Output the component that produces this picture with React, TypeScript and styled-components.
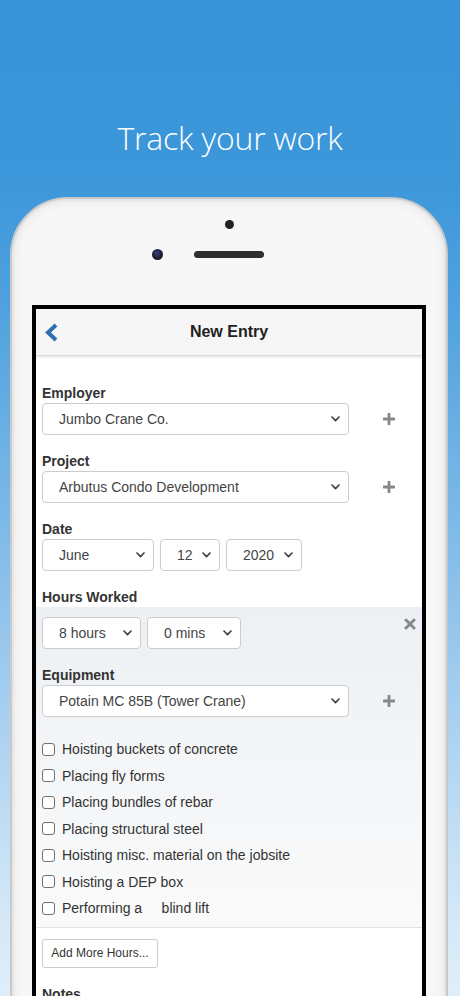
import styled, { createGlobalStyle } from "styled-components";

const GlobalStyle = createGlobalStyle`
  html, body {
    margin: 0;
    padding: 0;
    height: 100%;
    overflow: hidden;
  }

  #root {
    height: 100%;
  }

  * {
    box-sizing: border-box;
  }
`;

const uiFont = `"Liberation Sans", Arial, Helvetica, sans-serif`;

const tasks = [
  "Hoisting buckets of concrete",
  "Placing fly forms",
  "Placing bundles of rebar",
  "Placing structural steel",
  "Hoisting misc. material on the jobsite",
  "Hoisting a DEP box",
  "Performing a     blind lift",
];

const Chevron = () => (
  <svg width="9" height="6" viewBox="0 0 9 6" fill="none">
    <polyline
      points="1,1 4.5,4.6 8,1"
      stroke="#444"
      strokeWidth="1.7"
      strokeLinecap="round"
      strokeLinejoin="round"
    />
  </svg>
);

const PlusIcon = () => (
  <svg width="12" height="12" viewBox="0 0 12 12">
    <rect x="4.6" y="0" width="2.8" height="12" rx="0.6" fill="#888" />
    <rect x="0" y="4.6" width="12" height="2.8" rx="0.6" fill="#888" />
  </svg>
);

const CloseIcon = () => (
  <svg width="12" height="12" viewBox="0 0 12 12">
    <path
      d="M2 2 L10 10 M10 2 L2 10"
      stroke="#888"
      strokeWidth="3"
      strokeLinecap="round"
    />
  </svg>
);

const BackIcon = () => (
  <svg width="15" height="19" viewBox="0 0 15 19">
    <polyline
      points="12,2 4,9.5 12,17"
      fill="none"
      stroke="#2f6db5"
      strokeWidth="4"
      strokeLinejoin="miter"
    />
  </svg>
);

type SelectProps = {
  value: string;
  width: number;
};

const Select = ({ value, width }: SelectProps) => (
  <SelectBox style={{ width }}>
    <span>{value}</span>
    <Chevron />
  </SelectBox>
);

type FieldProps = {
  label: string;
  value: string;
};

const SelectField = ({ label, value }: FieldProps) => (
  <Field>
    <Label>{label}</Label>
    <AddRow>
      <Select value={value} width={307} />
      <AddButton>
        <PlusIcon />
      </AddButton>
    </AddRow>
  </Field>
);

export default function App() {
  return (
    <Page>
      <GlobalStyle />
      <Headline>Track your work</Headline>
      <Phone>
        <Sensors>
          <FrontSensor />
          <EarRow>
            <Lens />
            <Speaker />
          </EarRow>
        </Sensors>
        <Screen>
          <NavBar>
            <BackIcon />
            <NavTitle>New Entry</NavTitle>
          </NavBar>
          <Form>
            <SelectField label="Employer" value="Jumbo Crane Co." />
            <SelectField label="Project" value="Arbutus Condo Development" />
            <Field>
              <Label>Date</Label>
              <SelectRow>
                <Select value="June" width={112} />
                <Select value="12" width={60} />
                <Select value="2020" width={76} />
              </SelectRow>
            </Field>
            <Label>Hours Worked</Label>
            <HoursPanel>
              <HoursRow>
                <SelectRow>
                  <Select value="8 hours" width={99} />
                  <Select value="0 mins" width={94} />
                </SelectRow>
                <RemoveButton>
                  <CloseIcon />
                </RemoveButton>
              </HoursRow>
              <SelectField label="Equipment" value="Potain MC 85B (Tower Crane)" />
              <TaskList>
                {tasks.map((task) => (
                  <Task key={task}>
                    <Box />
                    <TaskText>{task}</TaskText>
                  </Task>
                ))}
              </TaskList>
            </HoursPanel>
            <MoreButton>Add More Hours...</MoreButton>
            <Label>Notes</Label>
          </Form>
        </Screen>
      </Phone>
    </Page>
  );
}

const Page = styled.div`
  height: 100%;
  overflow: hidden;
  display: flex;
  flex-direction: column;
  background: linear-gradient(
    180deg,
    #3792d8 0%,
    #3c97da 18%,
    #52a3df 32%,
    #7cb9e8 52%,
    #a9d0f0 72%,
    #d4e8f7 92%,
    #e0eef9 100%
  );
`;

const Headline = styled.h1`
  margin: 0;
  padding-top: 122px;
  text-align: center;
  font-family: "Open Sans", sans-serif;
  font-weight: 300;
  font-size: 32px;
  line-height: 32px;
  color: #ffffff;
  letter-spacing: -0.2px;
`;

const Phone = styled.div`
  margin: 43px 0 0 10px;
  width: 438px;
  height: 1000px;
  flex-shrink: 0;
  border: 2px solid #c9c9c9;
  border-radius: 58px;
  background: #f7f7f7;
  box-shadow: inset 0 0 0 2px #e6e6e6, inset 0 0 9px 4px rgba(0, 0, 0, 0.05);
  display: flex;
  flex-direction: column;
`;

const Sensors = styled.div`
  height: 106px;
  padding-top: 21px;
  display: flex;
  flex-direction: column;
  align-items: center;
`;

const FrontSensor = styled.div`
  width: 9px;
  height: 9px;
  border-radius: 50%;
  background: #222;
`;

const EarRow = styled.div`
  width: 100%;
  margin-top: 20px;
  display: grid;
  grid-template-columns: 1fr auto 1fr;
  align-items: center;
`;

const Lens = styled.div`
  justify-self: end;
  margin-right: 31px;
  width: 11px;
  height: 11px;
  border-radius: 50%;
  background: radial-gradient(circle at 45% 40%, #3a3f7a 0%, #1b1d33 55%, #0d0d12 100%);
`;

const Speaker = styled.div`
  width: 70px;
  height: 7px;
  border-radius: 4px;
  background: #2e2e2e;
`;

const Screen = styled.div`
  margin: 0 20px 0 20px;
  flex: 1;
  border: 4px solid #000;
  background: #fff;
  display: flex;
  flex-direction: column;
  font-family: ${uiFont};
`;

const NavBar = styled.div`
  position: relative;
  z-index: 1;
  height: 47px;
  padding-left: 8px;
  display: grid;
  grid-template-columns: 30px 1fr 30px;
  align-items: center;
  background: #f6f6f6;
  border-bottom: 1px solid #d9d9d9;
  box-shadow: 0 1px 3px rgba(0, 0, 0, 0.12);
`;

const NavTitle = styled.div`
  text-align: center;
  font-size: 16px;
  font-weight: bold;
  color: #222;
  margin-left: -8px;
`;

const Form = styled.div`
  padding: 27px 6px 0;
  display: flex;
  flex-direction: column;
  align-items: flex-start;
`;

const Field = styled.div`
  width: 100%;
  margin-bottom: 16px;
`;

const Label = styled.div`
  font-size: 14px;
  line-height: 20px;
  font-weight: bold;
  color: #333;
`;

const AddRow = styled.div`
  display: flex;
  align-items: center;
`;

const AddButton = styled.div`
  margin-left: 34px;
  display: flex;
  align-items: center;
`;

const SelectRow = styled.div`
  display: flex;
  gap: 6px;
`;

const SelectBox = styled.div`
  height: 32px;
  padding: 0 8px 0 16px;
  display: flex;
  align-items: center;
  justify-content: space-between;
  border: 1px solid #cccccc;
  border-radius: 4px;
  background: #fff;
  font-size: 14px;
  color: #444;
  white-space: nowrap;
`;

const HoursPanel = styled.div`
  align-self: stretch;
  margin: 0 -6px;
  padding: 10px 6px 5px;
  background: linear-gradient(180deg, #ecf0f4 0%, #f3f5f7 45%, #fafafa 100%);
  border-bottom: 1px solid #e2e2e2;
`;

const HoursRow = styled.div`
  display: flex;
  align-items: flex-start;
  justify-content: space-between;
  margin-bottom: 16px;
`;

const RemoveButton = styled.div`
  margin-top: 1px;
  line-height: 0;
`;

const TaskList = styled.div`
  margin-top: 19px;
`;

const Task = styled.div`
  height: 26.5px;
  display: flex;
  align-items: center;
  gap: 7px;
`;

const Box = styled.span`
  width: 13px;
  height: 13px;
  border: 1px solid #707070;
  border-radius: 3px;
  background: #fff;
  flex-shrink: 0;
`;

const TaskText = styled.span`
  font-size: 14px;
  color: #333;
  white-space: pre;
`;

const MoreButton = styled.button`
  margin: 11px 0 16px;
  height: 29px;
  width: 116px;
  padding: 0;
  border: 1px solid #cccccc;
  border-radius: 3px;
  background: #fff;
  font-family: ${uiFont};
  font-size: 12px;
  color: #333;
`;
